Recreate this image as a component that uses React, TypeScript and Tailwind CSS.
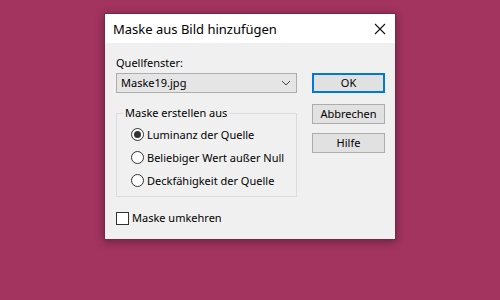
import React from "react";

const font = { fontFamily: '"Noto Sans", "Open Sans", sans-serif' };

function Radio({ checked, label }: { checked?: boolean; label: string }) {
  return (
    <div className="flex items-center h-[23px] pl-[14px] whitespace-nowrap">
      <div className="shrink-0 w-[13px] h-[13px] rounded-full border border-[#333333] bg-white flex items-center justify-center">
        {checked && <div className="w-[7px] h-[7px] rounded-full bg-[#333333]" />}
      </div>
      <span className="ml-[3px] text-[11px] leading-[16px] text-black">{label}</span>
    </div>
  );
}

export default function App() {
  return (
    <div className="w-[500px] h-[300px] bg-[#a2345f] overflow-hidden" style={font}>
      <div className="ml-[104px] mt-[13px] w-[292px] h-[227px] bg-[#f0f0f0] border border-[#7a2747] shadow-[0_2px_8px_rgba(0,0,0,0.35)] flex flex-col">
        <div className="h-[29px] bg-white flex items-center justify-between pl-[8px] pr-[9px]">
          <span className="text-[13px] text-black leading-[16px] whitespace-nowrap">Maske aus Bild hinzufügen</span>
          <svg width="12" height="12" viewBox="0 0 12 12">
            <path d="M1 1 L11 11 M11 1 L1 11" stroke="#111" strokeWidth="1.1" />
          </svg>
        </div>
        <div className="flex pl-[11px] pt-[11px]">
          <div className="w-[181px] flex flex-col">
            <div className="h-[17px] text-[11px] leading-[17px] text-black">Quellfenster:</div>
            <div className="mt-[2px] h-[20px] bg-[#e5e5e5] border border-[#adadad] flex items-center justify-between pl-[4px] pr-[5px]">
              <span className="text-[11px] leading-[16px] text-black">Maske19.jpg</span>
              <svg width="10" height="6" viewBox="0 0 10 6">
                <path d="M1 1 L5 5 L9 1" stroke="#444" strokeWidth="1" fill="none" />
              </svg>
            </div>
            <fieldset className="mt-[12px] border border-[#dcdcdc] h-[92px] pt-[2px] min-w-0">
              <legend className="ml-[6px] px-[2px] text-[11px] leading-[16px] text-black whitespace-nowrap">Maske erstellen aus</legend>
              <Radio checked label="Luminanz der Quelle" />
              <Radio label="Beliebiger Wert außer Null" />
              <Radio label="Deckfähigkeit der Quelle" />
            </fieldset>
            <div className="mt-[13px] flex items-center whitespace-nowrap">
              <div className="shrink-0 w-[13px] h-[13px] border border-[#333333] bg-white" />
              <span className="ml-[3px] text-[11px] leading-[16px] text-black">Maske umkehren</span>
            </div>
          </div>
          <div className="ml-[15px] w-[73px] flex flex-col pt-[19px]">
            <div className="h-[20px] bg-[#e1e1e1] border-2 border-[#0078d7] flex items-center justify-center text-[11px] text-black">OK</div>
            <div className="mt-[11px] h-[20px] bg-[#e1e1e1] border border-[#adadad] flex items-center justify-center text-[11px] text-black">Abbrechen</div>
            <div className="mt-[9px] h-[20px] bg-[#e1e1e1] border border-[#adadad] flex items-center justify-center text-[11px] text-black">Hilfe</div>
          </div>
        </div>
      </div>
    </div>
  );
}
